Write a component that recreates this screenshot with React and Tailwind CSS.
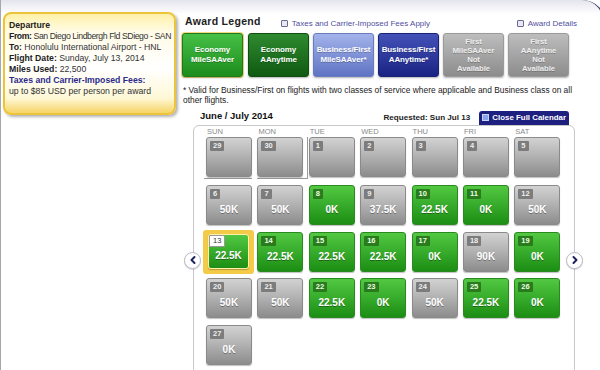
import { ChevronLeft, ChevronRight } from "lucide-react";

const font = { fontFamily: '"Liberation Sans", Arial, sans-serif' };

const legend = [
    { lines: ["Economy", "MileSAAver"], cls: "bg-[linear-gradient(#46c046,#1c8c1c)] border-[#1f7a1f] text-white", selected: true },
    { lines: ["Economy", "AAnytime"], cls: "bg-[linear-gradient(#2f8a2f,#0f5a12)] border-[#0f4f12] text-white" },
    { lines: ["Business/First", "MileSAAver*"], cls: "bg-[linear-gradient(#a3b2ea,#5f74c4)] border-[#6a7cc0] text-white" },
    { lines: ["Business/First", "AAnytime*"], cls: "bg-[linear-gradient(#4352b8,#1a2383)] border-[#1a2275] text-white" },
    { lines: ["First", "MileSAAver", "Not", "Available"], cls: "bg-[linear-gradient(#bdbdbd,#8c8c8c)] border-[#9a9a9a] text-[#eeeeee]" },
    { lines: ["First", "AAnytime", "Not", "Available"], cls: "bg-[linear-gradient(#bdbdbd,#8c8c8c)] border-[#9a9a9a] text-[#eeeeee]" },
];

const days = ["SUN", "MON", "TUE", "WED", "THU", "FRI", "SAT"];

// g = green (available), s = gray
const weeks = [
    [["29", "", "s"], ["30", "", "s"], ["1", "", "s"], ["2", "", "s"], ["3", "", "s"], ["4", "", "s"], ["5", "", "s"]],
    [["6", "50K", "s"], ["7", "50K", "s"], ["8", "0K", "g"], ["9", "37.5K", "s"], ["10", "22.5K", "g"], ["11", "0K", "g"], ["12", "50K", "s"]],
    [["13", "22.5K", "g"], ["14", "22.5K", "g"], ["15", "22.5K", "g"], ["16", "22.5K", "g"], ["17", "0K", "g"], ["18", "90K", "s"], ["19", "0K", "g"]],
    [["20", "50K", "s"], ["21", "50K", "s"], ["22", "22.5K", "g"], ["23", "0K", "g"], ["24", "50K", "s"], ["25", "22.5K", "g"], ["26", "0K", "g"]],
    [["27", "0K", "s"]],
];

function DayCell({ date, value, kind }) {
    const green = kind === "g";
    const selected = date === "13";
    const box = (
        <div
            className={
                "rounded-[3px] border flex flex-col shadow-[0_1px_1px_rgba(0,0,0,0.25)] " +
                (green
                    ? "bg-[linear-gradient(#52c842,#1c8e14)] border-[#2a8a20]"
                    : "bg-[linear-gradient(#d2d2d2,#b4b4b4_45%,#8c8c8c)] border-[#8a8a8a]") +
                (selected ? " w-[41px] h-[35px] border-[#fff2a8] border-[1.5px]" : " w-[46px] h-[40px]")
            }
        >
            <div className={"flex " + (selected ? "pt-0 pl-0" : "pt-[3px] pl-[3px]")}>
                <span
                    className={
                        "text-[7.5px] leading-[10px] px-[3px] rounded-[1px] font-bold " +
                        (selected
                            ? "bg-white text-[#333] border border-[#999] font-normal"
                            : green
                            ? "bg-[#2a7a1e] text-[#e8ffe0]"
                            : "bg-[#7c7c7c] text-[#eeeeee]")
                    }
                >
                    {date}
                </span>
            </div>
            <div className="flex-1 flex items-center justify-center text-white font-bold text-[10px] leading-none pb-[3px] [text-shadow:0_1px_0_rgba(0,0,0,0.35)]">
                {value}
            </div>
        </div>
    );
    if (selected) {
        return (
            <div className="w-[51px] h-[44px] -ml-[3px] -mt-[2px] rounded-[3px] bg-[#f4cb48] flex items-center justify-center">
                {box}
            </div>
        );
    }
    return box;
}

export default function App() {
    return (
        <div className="w-[600px] h-[370px] overflow-hidden bg-white" style={font}>
            <div className="w-[606px] h-[380px] border-l border-l-[#a6a6b0] border-r-2 border-r-[#363a66] rounded-tr-[24px] bg-[linear-gradient(#e4e4ee,#ffffff_14px)] flex pt-[12px] pl-[2px]">
                {/* departure summary */}
                <div className="w-[173px] h-[103px] shrink-0 rounded-[8px] border-2 border-[#ecc43c] bg-[linear-gradient(#fff1a8,#fffbe6_18%,#ffffff_55%,#fff8d6_85%,#f6d466)] shadow-[2px_2px_3px_rgba(0,0,0,0.3)] px-[4px] pt-[6px] text-[8.7px] leading-[11px] text-[#333] whitespace-nowrap">
                    <div className="font-bold text-[#222]">Departure</div>
                    <div className="tracking-[-0.42px]"><b className="text-[#222]">From:</b> San Diego Lindbergh Fld SDiego - SAN</div>
                    <div><b className="text-[#222]">To:</b> Honolulu International Airport - HNL</div>
                    <div><b className="text-[#222]">Flight Date:</b> Sunday, July 13, 2014</div>
                    <div><b className="text-[#222]">Miles Used:</b> 22,500</div>
                    <div className="font-bold text-[#2b2b8c]">Taxes and Carrier-Imposed Fees:</div>
                    <div>up to $85 USD per person per award</div>
                </div>

                <div className="w-[410px] ml-[5px] flex flex-col">
                    <div className="flex items-end h-[18px] pl-[4px] pr-[14px]">
                        <span className="font-bold text-[10.5px] text-[#222] tracking-[0.3px]">Award Legend</span>
                        <span className="ml-[20px] flex items-center gap-[4px] text-[8px] text-[#5050a0]">
                            <span className="w-[7px] h-[7px] border border-[#6a6a90] rounded-[1px] bg-[#e8e8f4]" />
                            Taxes and Carrier-Imposed Fees Apply
                        </span>
                        <span className="ml-auto flex items-center gap-[4px] text-[8px] text-[#5050a0]">
                            <span className="w-[7px] h-[7px] border border-[#6a6a90] rounded-[1px] bg-[#e8e8f4]" />
                            Award Details
                        </span>
                    </div>

                    <div className="flex gap-[4px] mt-[2px] items-center">
                        {legend.map((l, i) => (
                            <div
                                key={i}
                                className={l.selected ? "p-[1px] rounded-[4px] bg-[#f7de80]" : ""}
                            >
                                <div
                                    className={
                                        "w-[61px] h-[44px] rounded-[3px] border flex flex-col items-center justify-center text-center font-bold shadow-[0_1px_2px_rgba(0,0,0,0.3)] [text-shadow:0_1px_0_rgba(0,0,0,0.25)] tracking-[-0.1px] " +
                                        (l.lines.length > 2 ? "text-[7.8px] leading-[9px] " : "text-[8px] leading-[10px] ") +
                                        l.cls
                                    }
                                >
                                    {l.lines.map(t => (
                                        <div key={t}>{t}</div>
                                    ))}
                                </div>
                            </div>
                        ))}
                    </div>

                    <p className="mt-[7px] pl-[2px] pr-[10px] text-[8.4px] leading-[10.5px] text-[#222]">
                        * Valid for Business/First on flights with two classes of service where applicable and Business class on all other flights.
                    </p>

                    <div className="mt-[5px] flex items-end h-[14px] pl-[19px] pr-[22px]">
                        <span className="font-bold text-[9.5px] text-[#111] pb-[1px]">June / July 2014</span>
                        <span className="ml-auto font-bold text-[8.1px] text-[#222] pb-[1px]">Requested: Sun Jul 13</span>
                        <span className="ml-[9px] h-[14px] px-[3px] rounded-t-[3px] bg-[#1e2080] flex items-center gap-[3px] text-white font-bold text-[7.9px]">
                            <span className="w-[7px] h-[7px] bg-[#8aa4e8] border border-[#c8d4f8]" />
                            Close Full Calendar
                        </span>
                    </div>

                    <div className="relative ml-[12px] w-[382px] h-[260px] border border-[#c8c8c8] rounded-[6px] pl-[12px] pt-[1px]">
                        <div className="grid grid-cols-[repeat(7,46px)] gap-x-[5.4px]">
                            {days.map(d => (
                                <div key={d} className="text-[7.5px] leading-[9px] text-[#8a8a8a] pl-[1px]">{d}</div>
                            ))}
                        </div>
                        <div className="mt-[1px] flex flex-col gap-[6.5px]">
                            {weeks.map((w, wi) => (
                                <div
                                    key={wi}
                                    className={"grid grid-cols-[repeat(7,46px)] gap-x-[5.4px] " + (wi === 0 ? "h-[42px]" : "h-[40px]")}
                                >
                                    {w.map(([d, v, k], di) => (
                                        <div
                                            key={d}
                                            className={
                                                wi === 0 && di === 0
                                                    ? "-ml-[2px] pl-[2px] border-b border-[#999] h-[42px]"
                                                    : wi === 0 && di === 1
                                                    ? "-mr-[5px] pr-[4px] border-b border-r border-[#999] h-[42px]"
                                                    : ""
                                            }
                                        >
                                            <DayCell date={d} value={v} kind={k} />
                                        </div>
                                    ))}
                                </div>
                            ))}
                        </div>

                        <button className="absolute -left-[10px] top-[126px] w-[17px] h-[17px] rounded-full bg-white border border-[#b8b8c8] flex items-center justify-center shadow-[0_1px_1px_rgba(0,0,0,0.15)]">
                            <ChevronLeft size={12} strokeWidth={4} color="#1e1f5e" />
                        </button>
                        <button className="absolute -right-[9px] top-[126px] w-[17px] h-[17px] rounded-full bg-white border border-[#b8b8c8] flex items-center justify-center shadow-[0_1px_1px_rgba(0,0,0,0.15)]">
                            <ChevronRight size={12} strokeWidth={4} color="#1e1f5e" />
                        </button>
                    </div>
                </div>
            </div>
        </div>
    );
}
